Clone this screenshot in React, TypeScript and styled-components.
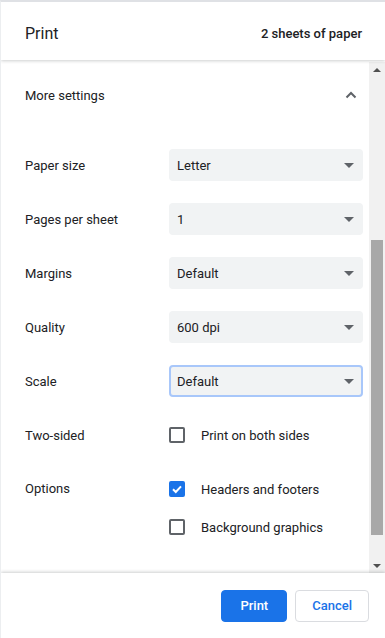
import styled, { createGlobalStyle } from 'styled-components';

const GlobalStyle = createGlobalStyle`
  html, body {
    margin: 0;
    padding: 0;
    background: #fff;
  }
  body {
    font-family: Roboto, "Liberation Sans", Arial, sans-serif;
    color: #202124;
  }
`;

const Dialog = styled.div`
  width: 385px;
  height: 638px;
  display: flex;
  flex-direction: column;
  border-top: 2px solid #dfe1e5;
  border-left: 1px solid #eceef0;
  box-sizing: border-box;
  background: #fff;
  overflow: hidden;
`;

const Header = styled.div`
  height: 58px;
  flex: none;
  box-sizing: border-box;
  display: flex;
  align-items: center;
  justify-content: space-between;
  padding: 5px 23px 0 24px;
  position: relative;
  z-index: 1;
  box-shadow: 0 1px 3px rgba(60, 64, 67, 0.25);
`;

const Title = styled.div`
  font-size: 16px;
  color: #202124;
`;

const Summary = styled.div`
  font-size: 13px;
  font-weight: 500;
  color: #202124;
`;

const Body = styled.div`
  flex: 1;
  display: flex;
  min-height: 0;
  margin-top: 2px;
`;

const Content = styled.div`
  flex: 1;
  padding: 0 6px 0 24px;
`;

const MoreSettings = styled.div`
  height: 66px;
  display: flex;
  align-items: center;
  justify-content: space-between;
  font-size: 13px;
  padding-right: 6px;
  margin-bottom: 10px;
`;

const Row = styled.div<{ $top?: boolean }>`
  display: grid;
  grid-template-columns: 144px 1fr;
  align-items: ${p => (p.$top ? 'start' : 'center')};
  min-height: 54px;
`;

const Label = styled.div<{ $pad?: number }>`
  font-size: 13px;
  color: #202124;
  padding-top: ${p => p.$pad ?? 0}px;
`;

const Select = styled.div<{ $focused?: boolean }>`
  height: 32px;
  box-sizing: border-box;
  border-radius: 4px;
  background: #f1f3f4;
  display: flex;
  align-items: center;
  justify-content: space-between;
  font-size: 13px;
  color: #202124;
  border: ${p => (p.$focused ? '2px solid #a8c7fa' : 'none')};
  padding: 0 ${p => (p.$focused ? '6px' : '8px')};
`;

const Arrow = styled.span`
  width: 0;
  height: 0;
  border-left: 5px solid transparent;
  border-right: 5px solid transparent;
  border-top: 5px solid #5f6368;
  margin-right: 1px;
`;

const Checks = styled.div`
  display: flex;
  flex-direction: column;
  gap: 22px;
  padding-top: 19px;
`;

const CheckRow = styled.div`
  display: flex;
  align-items: center;
  gap: 16px;
  height: 16px;
  font-size: 13px;
`;

const Box = styled.span<{ $checked?: boolean }>`
  width: 16px;
  height: 16px;
  box-sizing: border-box;
  border-radius: 2px;
  border: 2px solid ${p => (p.$checked ? '#1a73e8' : '#5f6368')};
  background: ${p => (p.$checked ? '#1a73e8' : '#fff')};
  display: flex;
  align-items: center;
  justify-content: center;
  flex: none;
`;

const ScrollBar = styled.div`
  width: 16px;
  flex: none;
  background: #f1f1f1;
  display: flex;
  flex-direction: column;
  align-items: center;
`;

const ScrollArrow = styled.div<{ $down?: boolean }>`
  height: 15px;
  display: flex;
  align-items: center;
  justify-content: center;
  &::after {
    content: '';
    border-left: 4px solid transparent;
    border-right: 4px solid transparent;
    ${p => (p.$down ? 'border-top: 4px solid #505050;' : 'border-bottom: 4px solid #505050;')}
  }
`;

const Track = styled.div`
  flex: 1;
  width: 100%;
  display: flex;
  flex-direction: column;
  align-items: center;
  padding-top: 163px;
`;

const Thumb = styled.div`
  width: 12px;
  height: 295px;
  background: #a8a8a8;
`;

const Footer = styled.div`
  height: 65px;
  flex: none;
  display: flex;
  align-items: center;
  justify-content: flex-end;
  gap: 8px;
  padding: 0 16px 0 0;
  position: relative;
  box-shadow: 0 -1px 3px rgba(60, 64, 67, 0.25);
`;

const Button = styled.button<{ $primary?: boolean }>`
  height: 32px;
  border-radius: 4px;
  font-family: Roboto, "Liberation Sans", Arial, sans-serif;
  font-size: 13px;
  font-weight: 500;
  padding: 0 ${p => (p.$primary ? 18 : 16)}px;
  box-sizing: border-box;
  cursor: pointer;
  background: ${p => (p.$primary ? '#1a73e8' : '#fff')};
  color: ${p => (p.$primary ? '#fff' : '#1a73e8')};
  border: 1px solid ${p => (p.$primary ? '#1a73e8' : '#dadce0')};
`;

const selects = [
  { label: 'Paper size', value: 'Letter' },
  { label: 'Pages per sheet', value: '1' },
  { label: 'Margins', value: 'Default' },
  { label: 'Quality', value: '600 dpi' },
  { label: 'Scale', value: 'Default', focused: true },
];

const Check = () => (
  <svg width="12" height="12" viewBox="0 0 12 12">
    <path d="M2 6.2 L4.8 9 L10 3.4" fill="none" stroke="#fff" strokeWidth="2" />
  </svg>
);

const Chevron = () => (
  <svg width="12" height="8" viewBox="0 0 12 8">
    <path d="M1.5 6.5 L6 2 L10.5 6.5" fill="none" stroke="#5f6368" strokeWidth="2" />
  </svg>
);

export default function App() {
  return (
    <>
      <GlobalStyle />
      <Dialog>
        <Header>
          <Title>Print</Title>
          <Summary>2 sheets of paper</Summary>
        </Header>
        <Body>
          <Content>
            <MoreSettings>
              <span>More settings</span>
              <Chevron />
            </MoreSettings>
            {selects.map(s => (
              <Row key={s.label}>
                <Label>{s.label}</Label>
                <Select $focused={s.focused}>
                  <span>{s.value}</span>
                  <Arrow />
                </Select>
              </Row>
            ))}
            <Row>
              <Label>Two-sided</Label>
              <CheckRow>
                <Box />
                <span>Print on both sides</span>
              </CheckRow>
            </Row>
            <Row $top>
              <Label $pad={19}>Options</Label>
              <Checks>
                <CheckRow>
                  <Box $checked>
                    <Check />
                  </Box>
                  <span>Headers and footers</span>
                </CheckRow>
                <CheckRow>
                  <Box />
                  <span>Background graphics</span>
                </CheckRow>
              </Checks>
            </Row>
          </Content>
          <ScrollBar>
            <ScrollArrow />
            <Track>
              <Thumb />
            </Track>
            <ScrollArrow $down />
          </ScrollBar>
        </Body>
        <Footer>
          <Button $primary>Print</Button>
          <Button>Cancel</Button>
        </Footer>
      </Dialog>
    </>
  );
}
